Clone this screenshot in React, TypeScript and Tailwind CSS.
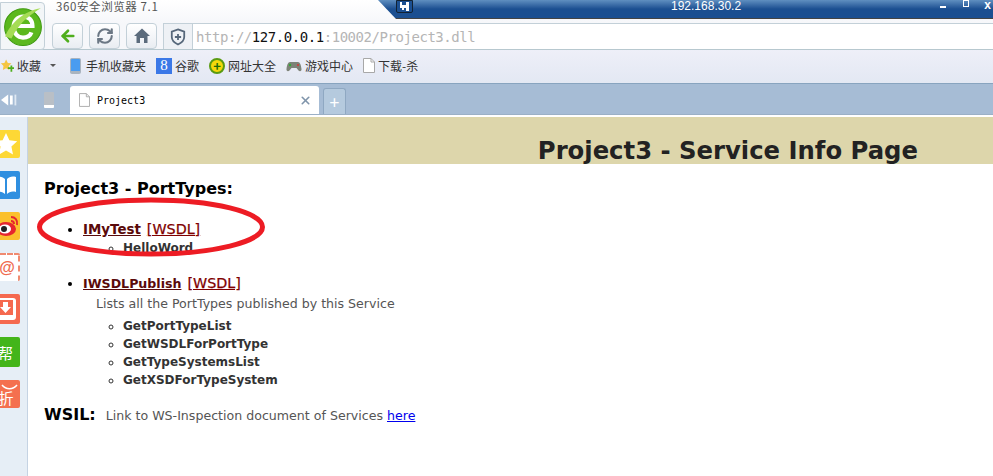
import { ArrowLeft, RefreshCw, X } from "lucide-react";

const sans = "font-['DejaVu_Sans',sans-serif]";
const ui = "font-['Noto_Sans_CJK_SC','Liberation_Sans',sans-serif]";
const mono = "font-['DejaVu_Sans_Mono','Liberation_Mono',monospace]";

function FileIcon({ className }: { className?: string }) {
  return (
    <svg viewBox="0 0 12 15" className={className} fill="#fff" stroke="#a8a8a8">
      <path d="M.5.5h7.500l3.500 3.500v10.500h-11z" />
      <path d="M8 .5v3.500h3.500" fill="none" />
    </svg>
  );
}

function NavButton({ children }: { children: React.ReactNode }) {
  return (
    <div className="flex h-[26px] w-[31px] items-center justify-center rounded-[4px] border border-[#c3d0d8] bg-gradient-to-b from-white to-[#e9edf2]">
      {children}
    </div>
  );
}

function Bookmark({ icon, label }: { icon: React.ReactNode; label: string }) {
  return (
    <div className={`flex items-center gap-[3px] text-[12px] text-[#333] ${ui}`}>
      {icon}
      <span>{label}</span>
    </div>
  );
}

function SideTile({ className, children }: { className: string; children: React.ReactNode }) {
  return (
    <div className={`flex h-[28px] w-[20px] items-center justify-center overflow-hidden rounded-r-[2px] ${className}`}>
      {children}
    </div>
  );
}

function Sidebar() {
  return (
    <aside className="flex w-[28px] shrink-0 flex-col items-start gap-[13px] border-r border-[#c5d3e3] bg-[#e6eef6] pt-[13px]">
      <SideTile className="bg-[#fdd835]">
        <svg viewBox="0 0 24 24" className="-ml-2 h-[24px] w-[24px] shrink-0" fill="#fff">
          <path d="M12 1l3.400 7.300 7.800.9-5.800 5.400 1.600 7.900L12 18.600l-7 3.900 1.600-7.900L.8 9.200l7.800-.9z" />
        </svg>
      </SideTile>
      <SideTile className="bg-[#2f8fe0]">
        <svg viewBox="0 0 24 20" className="-ml-2 h-[20px] w-[24px] shrink-0" fill="#fff">
          <path d="M2 2c4-1 7 0 9 2v15c-2-2-5-3-9-2zM22 2c-4-1-7 0-9 2v15c2-2 5-3 9-2z" />
        </svg>
      </SideTile>
      <SideTile className="bg-[#fbc02d]">
        <svg viewBox="0 0 24 24" className="-ml-1 h-[24px] w-[24px] shrink-0">
          <ellipse cx="10" cy="15" rx="10" ry="7" fill="#e6262e" />
          <ellipse cx="9" cy="15" rx="6" ry="4.500" fill="#fff" />
          <circle cx="8" cy="15" r="3" fill="#222" />
          <path d="M15 3c4 0 7 3 6 8M15 7c2 0 3 1 3 3" fill="none" stroke="#e6262e" strokeWidth="2" />
        </svg>
      </SideTile>
      <SideTile className="border-t-2 border-r-2 border-dashed border-[#f08a70] bg-white">
        <span className="-ml-1 text-[16px] leading-none font-bold text-[#ef6b4f] font-['Liberation_Sans',sans-serif]">@</span>
      </SideTile>
      <SideTile className="h-[30px] bg-[#f5694f]">
        <svg viewBox="0 0 20 30" className="h-[30px] w-[20px] shrink-0">
          <rect x="-4" y="4" width="20" height="22" rx="3" fill="#fff" />
          <rect x="-1" y="6" width="14" height="15" fill="#f5694f" />
          <path d="M3 8h5v5h3l-5.500 6L0 13h3z" fill="#fff" />
        </svg>
      </SideTile>
      <SideTile className="h-[30px] bg-[#43b51a]">
        <span className={`-ml-[9px] shrink-0 text-[15px] leading-none text-white ${ui}`}>帮</span>
      </SideTile>
      <SideTile className="bg-[#f4704f]">
        <div className="flex flex-col items-center">
          <svg viewBox="0 0 20 6" className="h-[6px] w-[20px]">
            <path d="M2 1c4 5 11 5 15 0" fill="none" stroke="#fff" strokeWidth="1.500" />
          </svg>
          <span className={`-ml-2 text-[15px] leading-none text-white ${ui}`}>折</span>
        </div>
      </SideTile>
    </aside>
  );
}

export default function App() {
  return (
    <div className="relative flex h-[476px] w-[993px] flex-col overflow-hidden bg-white">
      {/* chrome */}
      <div className="h-[23px] bg-gradient-to-b from-white to-[#f6f7fa] pl-[56px]">
        <span className={`block text-[11.5px] leading-[12px] tracking-[0.6px] text-[#555] ${ui}`}>360安全浏览器 7.1</span>
      </div>
      <div className="flex h-[27px] items-start gap-[6px] border-b border-[#b7c8cf] bg-[#f6f7fa] pl-[52px]">
        <NavButton>
          <ArrowLeft className="h-[18px] w-[18px] text-[#4fae1c]" strokeWidth={3.5} />
        </NavButton>
        <NavButton>
          <RefreshCw className="h-[18px] w-[18px] text-[#6b7784]" strokeWidth={2.8} />
        </NavButton>
        <NavButton>
          <svg viewBox="0 0 18 18" className="h-[18px] w-[18px]" fill="#5b6b7c">
            <path d="M9 1.500L17 9h-2.500v7H11v-5H7v5H3.500V9H1z" />
          </svg>
        </NavButton>
        <div className="flex h-[26px] flex-1 border-t border-l border-[#c3d0d8] bg-white">
          <div className="flex w-[29px] items-center justify-center border-r border-[#c3d0d8] bg-[#eef1f5]">
            <svg viewBox="0 0 18 20" className="h-[18px] w-[16px]" fill="none" stroke="#56677a" strokeWidth="2">
              <path d="M9 1.500l7 2.500v6c0 4-3 6.500-7 8.500-4-2-7-4.500-7-8.500V4z" />
              <path d="M9 6.500v7M5.500 10h7" />
            </svg>
          </div>
          <div className={`pt-[1px] pl-[3px] text-[14px] leading-[25px] tracking-[-0.45px] text-[#b5b5b5] ${mono}`}>
            http://<span className="text-[#111]">127.0.0.1</span>:10002/Project3.dll
          </div>
        </div>
      </div>
      <div className="flex h-[33px] items-center bg-gradient-to-b from-[#eeeff8] to-[#e3e8f3] pb-[2px]">
        <Bookmark
          icon={
            <svg viewBox="0 0 16 16" className="h-[15px] w-[14px]">
              <path d="M7 1l2 4 4 .5-3 3 .7 4.500L7 11l-3.700 2 .7-4.500-3-3L5 5z" fill="#f5c542" />
              <path d="M9 10h3V8h2v2h2v2h-2v3h-2v-3H9z" fill="#4fae1c" />
            </svg>
          }
          label="收藏"
        />
        <span className="ml-[9px] h-0 w-0 border-x-[3px] border-t-[3px] border-x-transparent border-t-[#555]" />
        <div className="ml-[14px] flex gap-[10px]">
          <Bookmark
            icon={
              <span className="flex w-[13px]">
                <span className="h-[16px] w-[11px] rounded-[2px] border border-[#aab4bf] border-b-[3px] bg-[#4a9cf0]" />
              </span>
            }
            label="手机收藏夹"
          />
          <Bookmark
            icon={
              <span className="flex h-[16px] w-[16px] items-center justify-center bg-[#3b78e7] font-['Liberation_Serif',serif] text-[15px] leading-none text-white">
                8
              </span>
            }
            label="谷歌"
          />
          <Bookmark
            icon={
              <span className="flex h-[16px] w-[16px] items-center justify-center rounded-full border-2 border-[#5a9a12] bg-[#f4d90a] text-[13px] leading-none font-bold text-[#1d6b0a]">
                +
              </span>
            }
            label="网址大全"
          />
          <Bookmark
            icon={
              <svg viewBox="0 0 16 14" className="h-[14px] w-[16px]">
                <path d="M4 3h8c2 0 3 3 3.500 7 .3 2-1.500 3-3 1.500L10.500 9h-5l-2 2.500C2 13 .2 12 .5 10 1 6 2 3 4 3z" fill="#7d8378" />
                <circle cx="12" cy="6" r="1" fill="#d33" />
                <circle cx="4" cy="6" r="1.200" fill="#3a3" />
              </svg>
            }
            label="游戏中心"
          />
          <Bookmark icon={<FileIcon className="h-[15px] w-[12px]" />} label="下载-杀" />
        </div>
      </div>
      <div className="flex h-[31px] items-end border-t border-[#88a4bf] bg-[#a6bcd5]">
        <div className="flex h-[28px] w-[70px] items-center">
          <svg viewBox="0 0 20 16" className="ml-[1px] h-[16px] w-[18px]" fill="#fff">
            <path d="M0 8l8-6v12zM10 3h3v10h-3z" />
            <path d="M15 2h2v12h-2z" fill="#dfe8f2" />
          </svg>
          <span className="ml-[25px] h-[16px] w-[10px] rounded-[1px] border-b-[3px] border-white bg-[#b9bfc6]" />
        </div>
        <div className="flex h-[28px] w-[249px] items-center rounded-t-[3px] bg-white pl-[9px] pr-[7px]">
          <FileIcon className="h-[14px] w-[11px]" />
          <span className={`ml-[7px] flex-1 text-[10px] text-black ${mono}`}>Project3</span>
          <X className="h-[13px] w-[13px] text-[#7f94aa]" strokeWidth={3} />
        </div>
        <div className="ml-[4px] flex h-[26px] w-[23px] items-center justify-center rounded-t-[3px] border border-b-0 border-[#8fa8c2] bg-[#b5cade] text-[18px] leading-none text-white">
          +
        </div>
      </div>
      <div className="h-[3px] border-t border-[#9bb0c6] bg-white" />

      {/* body */}
      <div className="flex min-h-0 flex-1">
        <Sidebar />
        <main className={`flex-1 ${sans}`}>
          <div className="flex h-[47px] items-end justify-end bg-[#ddd6ab] pr-[75px]">
            <h1 className="text-[24.3px] leading-[26px] font-bold text-[#222]">Project3 - Service Info Page</h1>
          </div>
          <div className="pl-[16px]">
            <h2 className="mt-[14px] text-[16px] leading-[22px] font-bold text-black">Project3 - PortTypes:</h2>
            <ul className="mt-[20px] list-disc pl-[39px] text-[12.6px]">
              <li className="leading-[18px]">
                <a className="text-[13.400px] font-bold text-[#5a0a0a] underline">IMyTest</a>
                <a className="ml-[6px] text-[14.300px] text-[#800000] underline [-webkit-text-stroke:0.25px_#800000]">[WSDL]</a>
                <ul className="list-[circle] pl-[40px] text-[12px] font-bold text-[#333]">
                  <li className="leading-[18px]">HelloWord</li>
                </ul>
              </li>
              <li className="mt-[17px] leading-[18px]">
                <a className="font-bold text-[#5a0a0a] underline">IWSDLPublish</a>
                <a className="ml-[6px] text-[14.300px] text-[#800000] underline [-webkit-text-stroke:0.25px_#800000]">[WSDL]</a>
                <p className="mt-[2px] pl-[13px] text-[#555]">Lists all the PortTypes published by this Service</p>
                <ul className="mt-[4px] list-[circle] pl-[40px] text-[12px] font-bold text-[#333]">
                  <li className="leading-[18px]">GetPortTypeList</li>
                  <li className="leading-[18px]">GetWSDLForPortType</li>
                  <li className="leading-[18px]">GetTypeSystemsList</li>
                  <li className="leading-[18px]">GetXSDForTypeSystem</li>
                </ul>
              </li>
            </ul>
            <p className="mt-[14px] flex items-baseline text-[12.6px] text-[#555]">
              <strong className="mr-[10px] text-[16px] font-bold text-black">WSIL:</strong>
              <span>
                Link to WS-Inspection document of Services <a className="text-[#0000ee] underline">here</a>
              </span>
            </p>
          </div>
        </main>
      </div>

      {/* overlays: remote session bar, browser logo, red annotation */}
      <div className="absolute top-0 right-0 left-[378px] h-[19px] bg-gradient-to-b from-[#5f8fc0] via-[#1b4f91] to-[#1b4f91] [clip-path:polygon(0_0,100%_0,100%_100%,18px_100%)] border-b border-[#444]">
        <span className="absolute left-[293px] -top-[3px] font-['Liberation_Sans',sans-serif] text-[12px] text-white">192.168.30.2</span>
        <span className="absolute top-[6px] left-[562px] h-[2px] w-[6px] bg-white" />
        <span className="absolute top-0 left-[585px] h-[7px] w-[6px] border border-white" />
        <span className="absolute -top-[4px] right-[2px] font-['Liberation_Sans',sans-serif] text-[12px] font-bold text-white">x</span>
      </div>
      <div className="absolute top-0 left-[396px] flex h-[13px] w-[17px] items-center justify-center rounded-b-[2px] border border-[#123] bg-[#1b4f91]">
        <svg viewBox="0 0 12 10" className="h-[10px] w-[12px]" fill="#fff">
          <path d="M1 0h2v3h4V0h3v9H7V6H5v2H3V6H1z" />
        </svg>
      </div>
      <div className="absolute top-[2px] left-0 flex h-[48px] w-[45px] items-center justify-center rounded-r-[4px] border border-[#c3d0d8] bg-[#f3f6f8]">
        <svg viewBox="0 0 40 40" className="h-[42px] w-[42px] shrink-0">
          <circle cx="20" cy="21" r="17.500" fill="#5cb81e" />
          <circle cx="20" cy="21" r="17.500" fill="none" stroke="#3f9a10" />
          <path d="M11 20h18c0-6-4-9-9-9s-9 4-9 10 4 10 9 10c4 0 7-2 8-5" fill="none" stroke="#fff" strokeWidth="4" />
          <path d="M3 30C8 17 22 5 37 3c-8 5-20 12-28 29z" fill="#a5dc55" />
        </svg>
      </div>
      <svg viewBox="0 0 993 476" className="pointer-events-none absolute inset-0 h-[476px] w-[993px]">
        <ellipse cx="151" cy="227" rx="111.500" ry="27" fill="none" stroke="#ed1c24" strokeWidth="5" />
      </svg>
    </div>
  );
}
